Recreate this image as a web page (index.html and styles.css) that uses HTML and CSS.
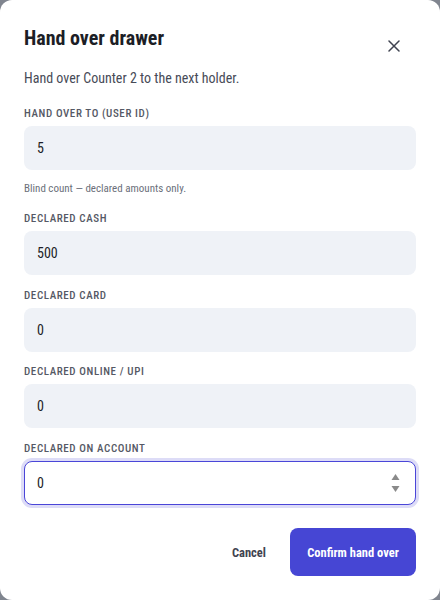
FILE: index.html
```html
<!DOCTYPE html>
<html lang="en">
<head>
<meta charset="utf-8">
<title>Hand over drawer</title>
<link rel="stylesheet" href="styles.css">
</head>
<body>
<div class="modal">
  <div class="header">
    <h1 class="title">Hand over drawer</h1>
    <button class="close" aria-label="Close">
      <svg width="12" height="12" viewBox="0 0 12 12"><path d="M1 1L11 11M11 1L1 11" stroke="#3f4350" stroke-width="1.5" stroke-linecap="round"/></svg>
    </button>
  </div>
  <p class="subtitle">Hand over Counter 2 to the next holder.</p>

  <div class="field first">
    <label class="label">Hand over to (user ID)</label>
    <div class="input">5</div>
  </div>
  <p class="hint">Blind count — declared amounts only.</p>

  <div class="field after-hint">
    <label class="label">Declared cash</label>
    <div class="input">500</div>
  </div>
  <div class="field">
    <label class="label">Declared card</label>
    <div class="input">0</div>
  </div>
  <div class="field">
    <label class="label">Declared online / UPI</label>
    <div class="input">0</div>
  </div>
  <div class="field">
    <label class="label">Declared on account</label>
    <div class="input focused">0
      <span class="spinner">
        <svg width="9" height="20" viewBox="0 0 9 20"><path d="M4.5 1L8.5 7H0.5Z" fill="#8a8a8a"/><path d="M4.5 19L8.5 13H0.5Z" fill="#8a8a8a"/></svg>
      </span>
    </div>
  </div>

  <div class="actions">
    <button class="btn cancel">Cancel</button>
    <button class="btn confirm">Confirm hand over</button>
  </div>
</div>
</body>
</html>
```

FILE: styles.css
```css
* { box-sizing: border-box; }
html, body { margin: 0; padding: 0; }
body {
  background: #80858f;
  font-family: "Roboto Condensed", Roboto, "Noto Sans", sans-serif;
  font-stretch: condensed;
  width: 440px;
  height: 600px;
  overflow: hidden;
}
.modal {
  background: #ffffff;
  border-radius: 12px;
  width: 440px;
  height: 600px;
  padding: 24px 24px 0 24px;
  display: flex;
  flex-direction: column;
}
.header {
  display: flex;
  justify-content: space-between;
  align-items: flex-start;
  height: 44px;
}
.title {
  margin: 0;
  font-size: 20px;
  line-height: 28px;
  font-weight: 700;
  color: #1c1e26;
}
.close {
  margin-top: 8px;
  margin-right: 8px;
  width: 28px;
  height: 28px;
  border: none;
  background: none;
  padding: 0;
  display: flex;
  align-items: center;
  justify-content: center;
}
.subtitle {
  margin: 0;
  font-size: 14px;
  line-height: 20px;
  color: #474b57;
}
.field { display: flex; flex-direction: column; margin-top: 13.5px; }
.field.first { margin-top: 19px; }
.field.after-hint { margin-top: 15px; }
.label {
  font-size: 11px;
  line-height: 14px;
  font-weight: 500;
  letter-spacing: 0.6px;
  text-transform: uppercase;
  color: #555965;
  margin-bottom: 5px;
}
.input {
  height: 44px;
  border-radius: 8px;
  background: #eff2f7;
  padding: 0 13px;
  display: flex;
  align-items: center;
  justify-content: space-between;
  font-size: 14px;
  color: #1c1e26;
}
.input.focused {
  background: #ffffff;
  border: 1px solid #4a46d8;
  box-shadow: 0 0 0 3px #dddcf7;
  padding: 0 12px;
}
.spinner { display: flex; align-items: center; margin-right: 3px; }
.hint {
  margin: 11px 0 0 0;
  font-size: 11px;
  line-height: 16px;
  color: #6b6f7a;
}
.actions {
  display: flex;
  justify-content: flex-end;
  gap: 10px;
  margin-top: 23.5px;
}
.btn {
  height: 48px;
  border: none;
  border-radius: 8px;
  font-family: inherit;
  font-stretch: condensed;
  font-size: 12.5px;
  font-weight: 700;
  cursor: pointer;
}
.cancel {
  background: transparent;
  color: #3f4350;
  padding: 0 14px;
}
.confirm {
  background: #4646d4;
  color: #ffffff;
  padding: 0 14px;
  width: 126px;
}
```
